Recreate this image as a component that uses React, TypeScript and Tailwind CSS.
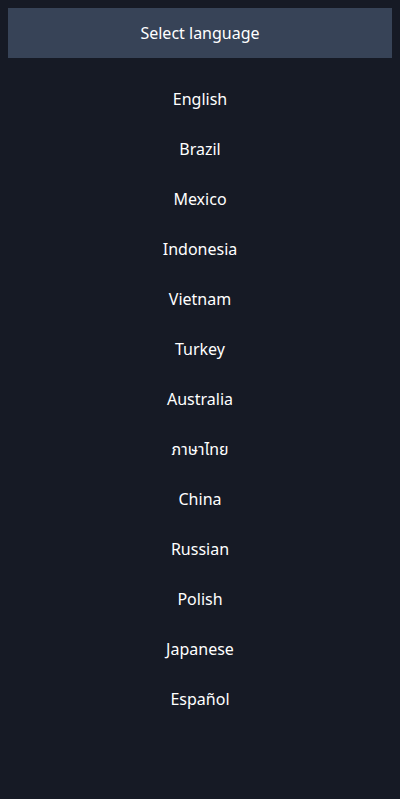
import React from "react";

const langs = ["English","Brazil","Mexico","Indonesia","Vietnam","Turkey","Australia","ภาษาไทย","China","Russian","Polish","Japanese","Español"];

export default function App() {
  return (
    <div className="min-h-[799px] w-full bg-[#161a25] p-2 text-white" style={{fontFamily: '"Noto Sans", "Noto Sans Thai", "Open Sans", sans-serif'}}>
      <div className="flex h-[50px] items-center justify-center bg-[#374357] text-[16px]">Select language</div>
      <ul className="mt-4 flex flex-col">
        {langs.map((l) => (
          <li key={l} className="flex h-[50px] items-center justify-center text-[16px]">{l}</li>
        ))}
      </ul>
    </div>
  );
}
